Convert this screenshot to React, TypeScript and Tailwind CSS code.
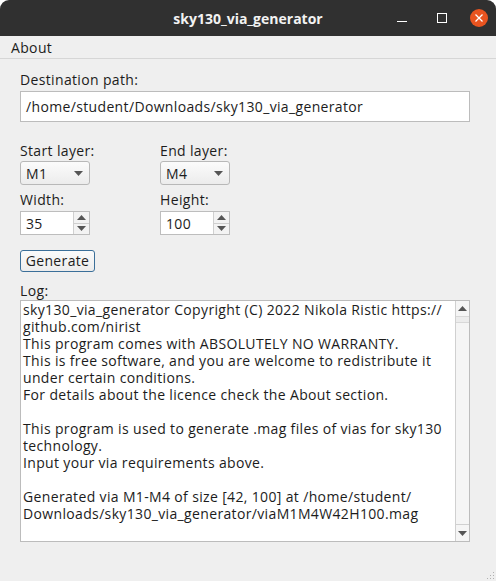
const font = { fontFamily: '"Open Sans", "Noto Sans", sans-serif' };

const logLines = [
  'sky130_via_generator Copyright (C) 2022 Nikola Ristic https://',
  'github.com/nirist',
  'This program comes with ABSOLUTELY NO WARRANTY.',
  'This is free software, and you are welcome to redistribute it',
  'under certain conditions.',
  'For details about the licence check the About section.',
  '',
  'This program is used to generate .mag files of vias for sky130',
  'technology.',
  'Input your via requirements above.',
  '',
  'Generated via M1-M4 of size [42, 100] at /home/student/',
  'Downloads/sky130_via_generator/viaM1M4W42H100.mag',
];

const Caret = ({ up }: { up?: boolean }) => (
  <svg width="9" height="5" viewBox="0 0 9 5" className="block">
    <path d={up ? 'M0 5 L4.5 0 L9 5 Z' : 'M0 0 L4.5 5 L9 0 Z'} fill="#555" />
  </svg>
);

const ComboBox = ({ value }: { value: string }) => (
  <div className="flex h-[24px] w-[70px] items-center justify-between rounded-[3px] border border-[#b8b8b8] bg-gradient-to-b from-[#fbfbfb] to-[#ececec] pl-[5px] pr-[6px] text-[14px] text-[#1c1c1c]">
    <span>{value}</span>
    <svg width="9" height="5" viewBox="0 0 9 5"><path d="M0 0 L4.5 5 L9 0 Z" fill="#555" /></svg>
  </div>
);

const SpinBox = ({ value }: { value: string }) => (
  <div className="flex h-[24px] w-[70px] border border-[#bdbdbd] bg-white text-[14px] text-[#1c1c1c]">
    <div className="flex flex-1 items-center pl-[5px]">{value}</div>
    <div className="flex w-[16px] flex-col border-l border-[#d0d0d0] bg-[#f3f3f3]">
      <div className="flex flex-1 items-center justify-center border-b border-[#cfcfcf]"><Caret up /></div>
      <div className="flex flex-1 items-center justify-center"><Caret /></div>
    </div>
  </div>
);

export default function App() {
  return (
    <div className="h-[581px] w-[496px] overflow-hidden bg-white" style={font}>
      <div className="flex h-[581px] flex-col rounded-t-[9px] bg-[#efefef]">
        {/* title bar */}
        <div className="relative flex h-[36px] items-center justify-center rounded-t-[9px] bg-[#303030]">
          <span className="text-[14px] font-bold text-[#f2f2f2]">sky130_via_generator</span>
          <div className="absolute right-[8px] top-0 flex h-[36px] items-center gap-[17px]">
            <div className="mt-[6px] h-[1px] w-[10px] bg-white" />
            <div className="ml-[13px] h-[10px] w-[10px] border border-white" />
            <div className="ml-[6px] flex h-[18px] w-[18px] items-center justify-center rounded-full bg-[#e95420]">
              <svg width="8" height="8" viewBox="0 0 8 8"><path d="M0.5 0.5 L7.5 7.5 M7.5 0.5 L0.5 7.5" stroke="white" strokeWidth="1.3" /></svg>
            </div>
          </div>
        </div>
        {/* menu bar */}
        <div className="flex h-[23px] items-center border-b border-[#d6d6d6] px-[11px] text-[14px] tracking-[0.35px] text-[#1c1c1c]">About</div>

        <div className="flex flex-1 flex-col px-[20px] pt-[12px] text-[14px] tracking-[0.35px] text-[#1c1c1c]">
          <div className="leading-[18px]">Destination path:</div>
          <div className="mt-[2px] flex h-[31px] w-[450px] items-center border border-[#bcbcbc] bg-white pl-[5px]">
            /home/student/Downloads/sky130_via_generator
          </div>

          <div className="mt-[20px] flex">
            <div className="w-[140px]">
              <div className="leading-[18px]">Start layer:</div>
              <div className="mt-[1px]"><ComboBox value="M1" /></div>
              <div className="mt-[6px] leading-[18px]">Width:</div>
              <div className="mt-[2px]"><SpinBox value="35" /></div>
            </div>
            <div>
              <div className="leading-[18px]">End layer:</div>
              <div className="mt-[1px]"><ComboBox value="M4" /></div>
              <div className="mt-[6px] leading-[18px]">Height:</div>
              <div className="mt-[2px]"><SpinBox value="100" /></div>
            </div>
          </div>

          <div className="mt-[15px]">
            <button className="h-[22px] w-[75px] rounded-[3px] border border-[#3b6f99] bg-gradient-to-b from-[#fbfbfb] to-[#ececec] text-[14px] leading-[18px] tracking-[0.35px] text-[#1c1c1c]">
              Generate
            </button>
          </div>

          <div className="mt-[10px] leading-[18px]">Log:</div>
          <div className="flex h-[242px] w-[450px] border border-[#bcbcbc] bg-white">
            <div className="flex-1 overflow-hidden pl-[2px] text-[14px] leading-[17px]">
              {logLines.map((l, i) => (
                <div key={i} className="h-[17px] whitespace-nowrap">{l}</div>
              ))}
            </div>
            <div className="flex w-[14px] flex-col border-l border-[#d0d0d0] bg-[#f5f5f5]">
              <div className="flex h-[15px] items-center justify-center"><Caret up /></div>
              <div className="h-[7px] border-y border-[#d8d8d8] bg-[#ececec]" />
              <div className="flex-1" />
              <div className="flex h-[17px] items-center justify-center border-t border-[#d0d0d0]"><Caret /></div>
            </div>
          </div>
          <div className="flex flex-1 items-end justify-end pb-[2px]">
            <div className="-mr-[18px] grid grid-cols-3 gap-[2px]">
              {[0, 0, 1, 0, 1, 1, 1, 1, 1].map((v, i) => (
                <div key={i} className={v ? 'h-[1px] w-[1px] bg-[#b0b0b0]' : 'h-[1px] w-[1px]'} />
              ))}
            </div>
          </div>
        </div>
      </div>
    </div>
  );
}
